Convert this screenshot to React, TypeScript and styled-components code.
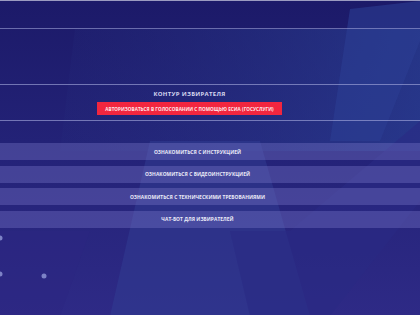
import styled, { createGlobalStyle } from "styled-components";

const GlobalStyle = createGlobalStyle`
  html, body, #root {
    margin: 0;
    height: 100%;
  }
  body {
    overflow: hidden;
    background: #1d1b6c;
  }
`

const Page = styled.div`
  position: relative;
  width: 420px;
  height: 315px;
  overflow: hidden;
  font-family: "Open Sans", "DejaVu Sans", sans-serif;
  border-top: 1px solid #9b9bc0;
  box-sizing: border-box;
`

const Backdrop = styled.svg`
  position: absolute;
  inset: 0;
  z-index: 0;
`

const Content = styled.div`
  position: relative;
  z-index: 1;
  display: flex;
  flex-direction: column;
`

const TopBar = styled.div`
  height: 27px;
  border-bottom: 1px solid rgba(170, 175, 225, 0.55);
`

const Spacer = styled.div`
  height: 55px;
`

const VoterBlock = styled.section`
  height: 30px;
  border-top: 1px solid rgba(170, 175, 225, 0.6);
  border-bottom: 1px solid rgba(170, 175, 225, 0.6);
  display: flex;
  flex-direction: column;
  align-items: center;
  padding: 5px 41px 0 0;
  gap: 4px;
`

const Title = styled.h2`
  margin: 0;
  font-size: 6px;
  line-height: 8px;
  font-weight: 700;
  color: #d4d5ef;
  letter-spacing: 0.3px;
`

const AuthButton = styled.button`
  border: 0;
  padding: 0 5px;
  height: 13px;
  width: 185px;
  background: #f2263f;
  color: #ffe6ea;
  font-family: inherit;
  font-size: 4.6px;
  font-weight: 700;
  letter-spacing: 0.05px;
  white-space: nowrap;
`

const LinkList = styled.nav`
  margin-top: 22px;
  display: flex;
  flex-direction: column;
  gap: 5.5px;
`

const LinkRow = styled.a`
  height: 17px;
  display: flex;
  align-items: center;
  justify-content: center;
  padding-right: 25px;
  background: rgba(120, 118, 200, 0.38);
  color: #ebebf8;
  font-size: 4.9px;
  font-weight: 700;
  letter-spacing: 0.05px;
  text-decoration: none;
`

const links = [
  "ОЗНАКОМИТЬСЯ С ИНСТРУКЦИЕЙ",
  "ОЗНАКОМИТЬСЯ С ВИДЕОИНСТРУКЦИЕЙ",
  "ОЗНАКОМИТЬСЯ С ТЕХНИЧЕСКИМИ ТРЕБОВАНИЯМИ",
  "ЧАТ-БОТ ДЛЯ ИЗБИРАТЕЛЕЙ",
]

export default function App() {
  return (
    <Page>
      <GlobalStyle/>
      <Backdrop width="420" height="315" viewBox="0 0 420 315">
        <defs>
          <linearGradient id="bg" x1="0" y1="0" x2="0" y2="1">
            <stop offset="0" stopColor="#1c1a69"/>
            <stop offset="0.45" stopColor="#232277"/>
            <stop offset="1" stopColor="#2e2a86"/>
          </linearGradient>
          <linearGradient id="glow" x1="0" y1="0" x2="1" y2="0">
            <stop offset="0" stopColor="#26307f" stopOpacity="0.2"/>
            <stop offset="1" stopColor="#2a4396" stopOpacity="0.9"/>
          </linearGradient>
        </defs>
        <rect width="420" height="315" fill="url(#bg)"/>
        <polygon points="75,28 420,28 420,150 60,150" fill="url(#glow)" opacity="0.7"/>
        <polygon points="350,8 420,0 420,40 380,140 330,140" fill="#2b3e93" opacity="0.6"/>
        <polygon points="150,140 260,140 310,315 110,315" fill="#313c92" opacity="0.55"/>
        <polygon points="230,230 290,230 420,120 420,200 330,315 250,315" fill="#2a2a84" opacity="0.6"/>
        <polygon points="0,230 90,230 60,315 0,315" fill="#2c2682" opacity="0.5"/>
        <circle cx="0" cy="237" r="2.5" fill="#7d82c6"/>
        <circle cx="0" cy="273" r="2.5" fill="#7d82c6"/>
        <circle cx="44" cy="275" r="2.5" fill="#7d82c6"/>
      </Backdrop>
      <Content>
        <TopBar/>
        <Spacer/>
        <VoterBlock>
          <Title>КОНТУР ИЗБИРАТЕЛЯ</Title>
          <AuthButton>АВТОРИЗОВАТЬСЯ В ГОЛОСОВАНИИ С ПОМОЩЬЮ ЕСИА (ГОСУСЛУГИ)</AuthButton>
        </VoterBlock>
        <LinkList>
          {links.map(l => <LinkRow key={l}>{l}</LinkRow>)}
        </LinkList>
      </Content>
    </Page>
  )
}
